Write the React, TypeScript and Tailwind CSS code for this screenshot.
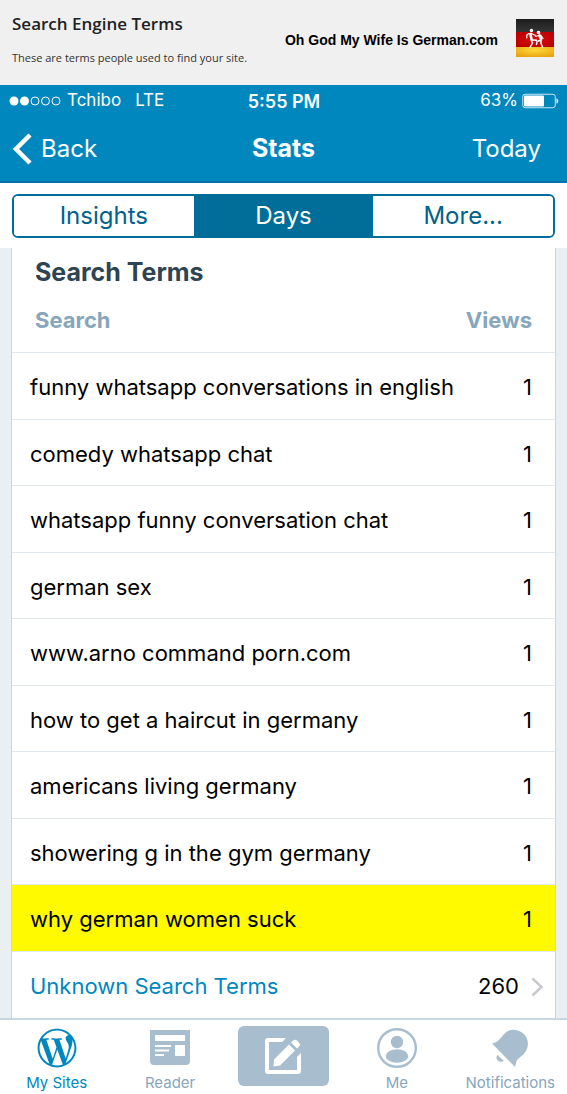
import { useState } from 'react';
import { FaWordpressSimple } from 'react-icons/fa';

const searchTerms = [
  { term: 'funny whatsapp conversations in english', views: 1 },
  { term: 'comedy whatsapp chat', views: 1 },
  { term: 'whatsapp funny conversation chat', views: 1 },
  { term: 'german sex', views: 1 },
  { term: 'www.arno command porn.com', views: 1 },
  { term: 'how to get a haircut in germany', views: 1 },
  { term: 'americans living germany', views: 1 },
  { term: 'showering g in the gym germany', views: 1 },
  { term: 'why german women suck', views: 1, highlighted: true },
];

const periods = ['Insights', 'Days', 'More...'];

function FlagLogo() {
  return (
    <svg viewBox="0 0 38 38" className="size-[38px]" aria-hidden="true">
      <defs>
        <linearGradient id="black" x1="0" y1="0" x2="0" y2="1">
          <stop offset="0" stopColor="#1d1d1d" />
          <stop offset="1" stopColor="#353535" />
        </linearGradient>
        <radialGradient id="red" cx="0.5" cy="0.5" r="0.6">
          <stop offset="0" stopColor="#e00d0d" />
          <stop offset="1" stopColor="#b80000" />
        </radialGradient>
        <radialGradient id="gold" cx="0.5" cy="0.3" r="0.7">
          <stop offset="0" stopColor="#ffd83c" />
          <stop offset="1" stopColor="#e8a512" />
        </radialGradient>
      </defs>
      <rect width="38" height="13" fill="url(#black)" />
      <rect y="13" width="38" height="15" fill="url(#red)" />
      <rect y="28" width="38" height="10" fill="url(#gold)" />
      <g stroke="#fff" fill="none" strokeLinecap="round" strokeLinejoin="round">
        <circle cx="15.5" cy="11.5" r="1.7" fill="#fff" stroke="none" />
        <circle cx="22.5" cy="13.5" r="1.8" fill="#fff" stroke="none" />
        <path d="M14.5 15l1 5.5" strokeWidth="2.6" />
        <path d="M13 14.5l-2.2 1.5v3M15.5 14.5l4 2" strokeWidth="1.2" />
        <path d="M15.5 21.5l1 2.5-2.5 4.5M16.5 21l4 .2" strokeWidth="1.5" />
        <path d="M23.5 16.5l1.5 3.5" strokeWidth="2.8" />
        <path d="M22.5 16.5l-3 1M25 16.5l2 3" strokeWidth="1.2" />
        <path d="M24 21.5l-3 1-.5 3M25 21.5v3l1.5 3.5" strokeWidth="1.5" />
      </g>
    </svg>
  );
}

function Battery() {
  return (
    <svg viewBox="0 0 37 16" className="h-4 w-[37px]" aria-hidden="true">
      <rect x="0.75" y="1.25" width="32.5" height="13.5" rx="2.5" fill="none" stroke="#fff" strokeOpacity="0.8" />
      <rect x="2" y="2.5" width="20" height="11" rx="1" fill="#fff" />
      <path d="M34.5 5.5c2.4.6 2.4 4.4 0 5z" fill="#fff" />
    </svg>
  );
}

function ReaderIcon() {
  return (
    <svg viewBox="0 0 40 36" className="h-9 w-10" aria-hidden="true">
      <path d="M0 0h40v31a4 4 0 0 1-4 4H4a4 4 0 0 1-4-4z" fill="currentColor" />
      <path d="M5 5h30v6H5zM25 15h10v11H25zM5 15h16v2H5zM5 19.5h14v2H5zM5 24h9v2H5z" fill="#fff" />
    </svg>
  );
}

function ComposeIcon() {
  return (
    <svg viewBox="0 0 38 38" className="size-[38px]" aria-hidden="true">
      <path d="M22 1H4a3 3 0 0 0-3 3v30a3 3 0 0 0 3 3h30a3 3 0 0 0 3-3V16l-4 4v13H5V5h13z" fill="#fff" />
      <path d="M10 22.5L25 7.5l6 6L16 28.5l-6.5 1zM27 5.5l2-2q2-1.6 4 0l2 2q1.6 2 0 4l-2 2z" fill="#fff" />
    </svg>
  );
}

function MeIcon() {
  return (
    <svg viewBox="0 0 40 40" className="size-10" aria-hidden="true">
      <circle cx="20" cy="20" r="18.8" fill="none" stroke="currentColor" strokeWidth="2.4" />
      <circle cx="20" cy="14" r="6.2" fill="currentColor" />
      <ellipse cx="20" cy="28" rx="11.3" ry="6.7" fill="currentColor" />
    </svg>
  );
}

function BellIcon() {
  return (
    <svg viewBox="0 0 38 40" className="h-10 w-[38px]" aria-hidden="true">
      <path
        d="M1 15.5C6 14.5 8 12 11 8.5C16 1.5 22 .5 28 3C35 6 38 12 36.5 19C35 25 31 27.5 27.5 30.5C24.5 33.5 25 36 24 39Z"
        fill="currentColor"
      />
      <path d="M6.500 27l6.500 6c-2.500 1.300-5 .8-6.500-.8s-1.300-3.600 0-5.200z" fill="currentColor" />
    </svg>
  );
}

export default function App() {
  const [period, setPeriod] = useState('Days');

  return (
    <div className="bg-white font-['Inter','Liberation_Sans',sans-serif] text-black">
      <header className="flex h-[85px] items-start justify-between bg-[#f0f0f0] pl-3 pr-[13px] font-['Open_Sans',sans-serif]">
        <div className="pt-3">
          <h1 className="text-[17px] leading-6 font-semibold text-[#222]">Search Engine Terms</h1>
          <p className="mt-3 text-[11px] leading-5 text-[#333]">These are terms people used to find your site.</p>
        </div>
        <div className="flex items-center gap-[18px] pt-[19px]">
          <span className="pt-1 font-['Liberation_Sans',Arial,sans-serif] text-[14px] font-bold">Oh God My Wife Is German.com</span>
          <FlagLogo />
        </div>
      </header>

      <div className="border-b-2 border-[#0374a8] bg-[#0087be] text-white">
        <div className="grid h-8 grid-cols-3 items-center pl-[9px] pr-2 text-[17px]">
          <div className="flex items-center gap-[6px]">
            <svg viewBox="0 0 52 10" className="h-[10px] w-[52px]" aria-hidden="true">
              <circle cx="5" cy="5" r="4.5" fill="#fff" />
              <circle cx="15.5" cy="5" r="4.5" fill="#fff" />
              <g fill="none" stroke="#fff">
                <circle cx="26" cy="5" r="4" />
                <circle cx="36.5" cy="5" r="4" />
                <circle cx="47" cy="5" r="4" />
              </g>
            </svg>
            <span>Tchibo</span>
            <span className="pl-2">LTE</span>
          </div>
          <span className="text-center text-[18px] font-semibold">5:55 PM</span>
          <div className="flex items-center justify-end gap-1">
            <span>63%</span>
            <Battery />
          </div>
        </div>
        <nav className="grid h-16 grid-cols-3 items-center pl-3 pr-[26px] text-[24px]">
          <button className="flex items-center gap-2">
            <svg viewBox="0 0 21 32" className="h-8 w-[21px]" aria-hidden="true">
              <path d="M18 2L4 16l14 14" fill="none" stroke="#fff" strokeWidth="4.5" />
            </svg>
            Back
          </button>
          <h2 className="pl-[14px] text-center text-[25px] font-bold">Stats</h2>
          <button className="text-right">Today</button>
        </nav>
      </div>

      <div className="px-3 pt-[11px] pb-[10px]">
        <div className="grid h-11 grid-cols-3 overflow-hidden rounded-md border-2 border-[#006e98] text-[24px]">
          {periods.map((p) => (
            <button
              key={p}
              onClick={() => setPeriod(p)}
              className={p === period ? 'bg-[#006e98] text-white' : 'bg-white text-[#00618a]'}
            >
              {p}
            </button>
          ))}
        </div>
      </div>

      <main className="bg-[#e9eff3] px-[11px]">
        <section className="border-x border-[#c8d7e1] bg-white">
          <h2 className="px-[23px] pt-2 text-[25px] leading-8 font-bold text-[#2e4453]">Search Terms</h2>
          <table className="w-full border-collapse text-[22px]">
            <thead>
              <tr className="h-16 text-[#87a6bc]">
                <th className="pt-[2px] pl-[23px] text-left font-bold">Search</th>
                <th className="pt-[2px] pr-[23px] text-right font-bold">Views</th>
              </tr>
            </thead>
            <tbody>
              {searchTerms.map(({ term, views, highlighted }) => (
                <tr
                  key={term}
                  className={`border-t border-[#e1e8ed] odd:h-[67px] even:h-[66px] ${highlighted ? 'bg-[#fffa00]' : ''}`}
                >
                  <td className="pt-1 pl-[18px]">{term}</td>
                  <td className="pt-1 pr-[23px] text-right">{views}</td>
                </tr>
              ))}
              <tr className="h-[67px] border-t border-[#e1e8ed]">
                <td className="pt-1 pl-[18px]">
                  <a href="#unknown" className="text-[#0087be]">Unknown Search Terms</a>
                </td>
                <td className="pt-1 pr-3">
                  <div className="flex items-center justify-end gap-3">
                    260
                    <svg viewBox="0 0 12 20" className="h-5 w-3" aria-hidden="true">
                      <path d="M1.5 1.5L10.5 10l-9 8.5" fill="none" stroke="#c7c7cc" strokeWidth="2.5" />
                    </svg>
                  </div>
                </td>
              </tr>
            </tbody>
          </table>
        </section>
      </main>

      <nav className="grid h-[75px] grid-cols-5 border-t-2 border-[#c8d7e1] text-[15px] text-[#87a6bc]">
        <button className="flex flex-col items-center pt-2 text-[#0087be]">
          <FaWordpressSimple className="size-10" />
          <span className="mt-1">My Sites</span>
        </button>
        <button className="flex flex-col items-center pt-2">
          <span className="flex h-10 items-center text-[#a8bece]">
            <ReaderIcon />
          </span>
          <span className="mt-1">Reader</span>
        </button>
        <button aria-label="New post" className="mx-auto mt-[6px] flex h-[60px] w-[91px] items-center justify-center rounded-md bg-[#a8bece]">
          <ComposeIcon />
        </button>
        <button className="flex flex-col items-center pt-2">
          <span className="text-[#a8bece]">
            <MeIcon />
          </span>
          <span className="mt-1">Me</span>
        </button>
        <button className="flex flex-col items-center pt-2">
          <span className="text-[#a8bece]">
            <BellIcon />
          </span>
          <span className="mt-1">Notifications</span>
        </button>
      </nav>
    </div>
  );
}
